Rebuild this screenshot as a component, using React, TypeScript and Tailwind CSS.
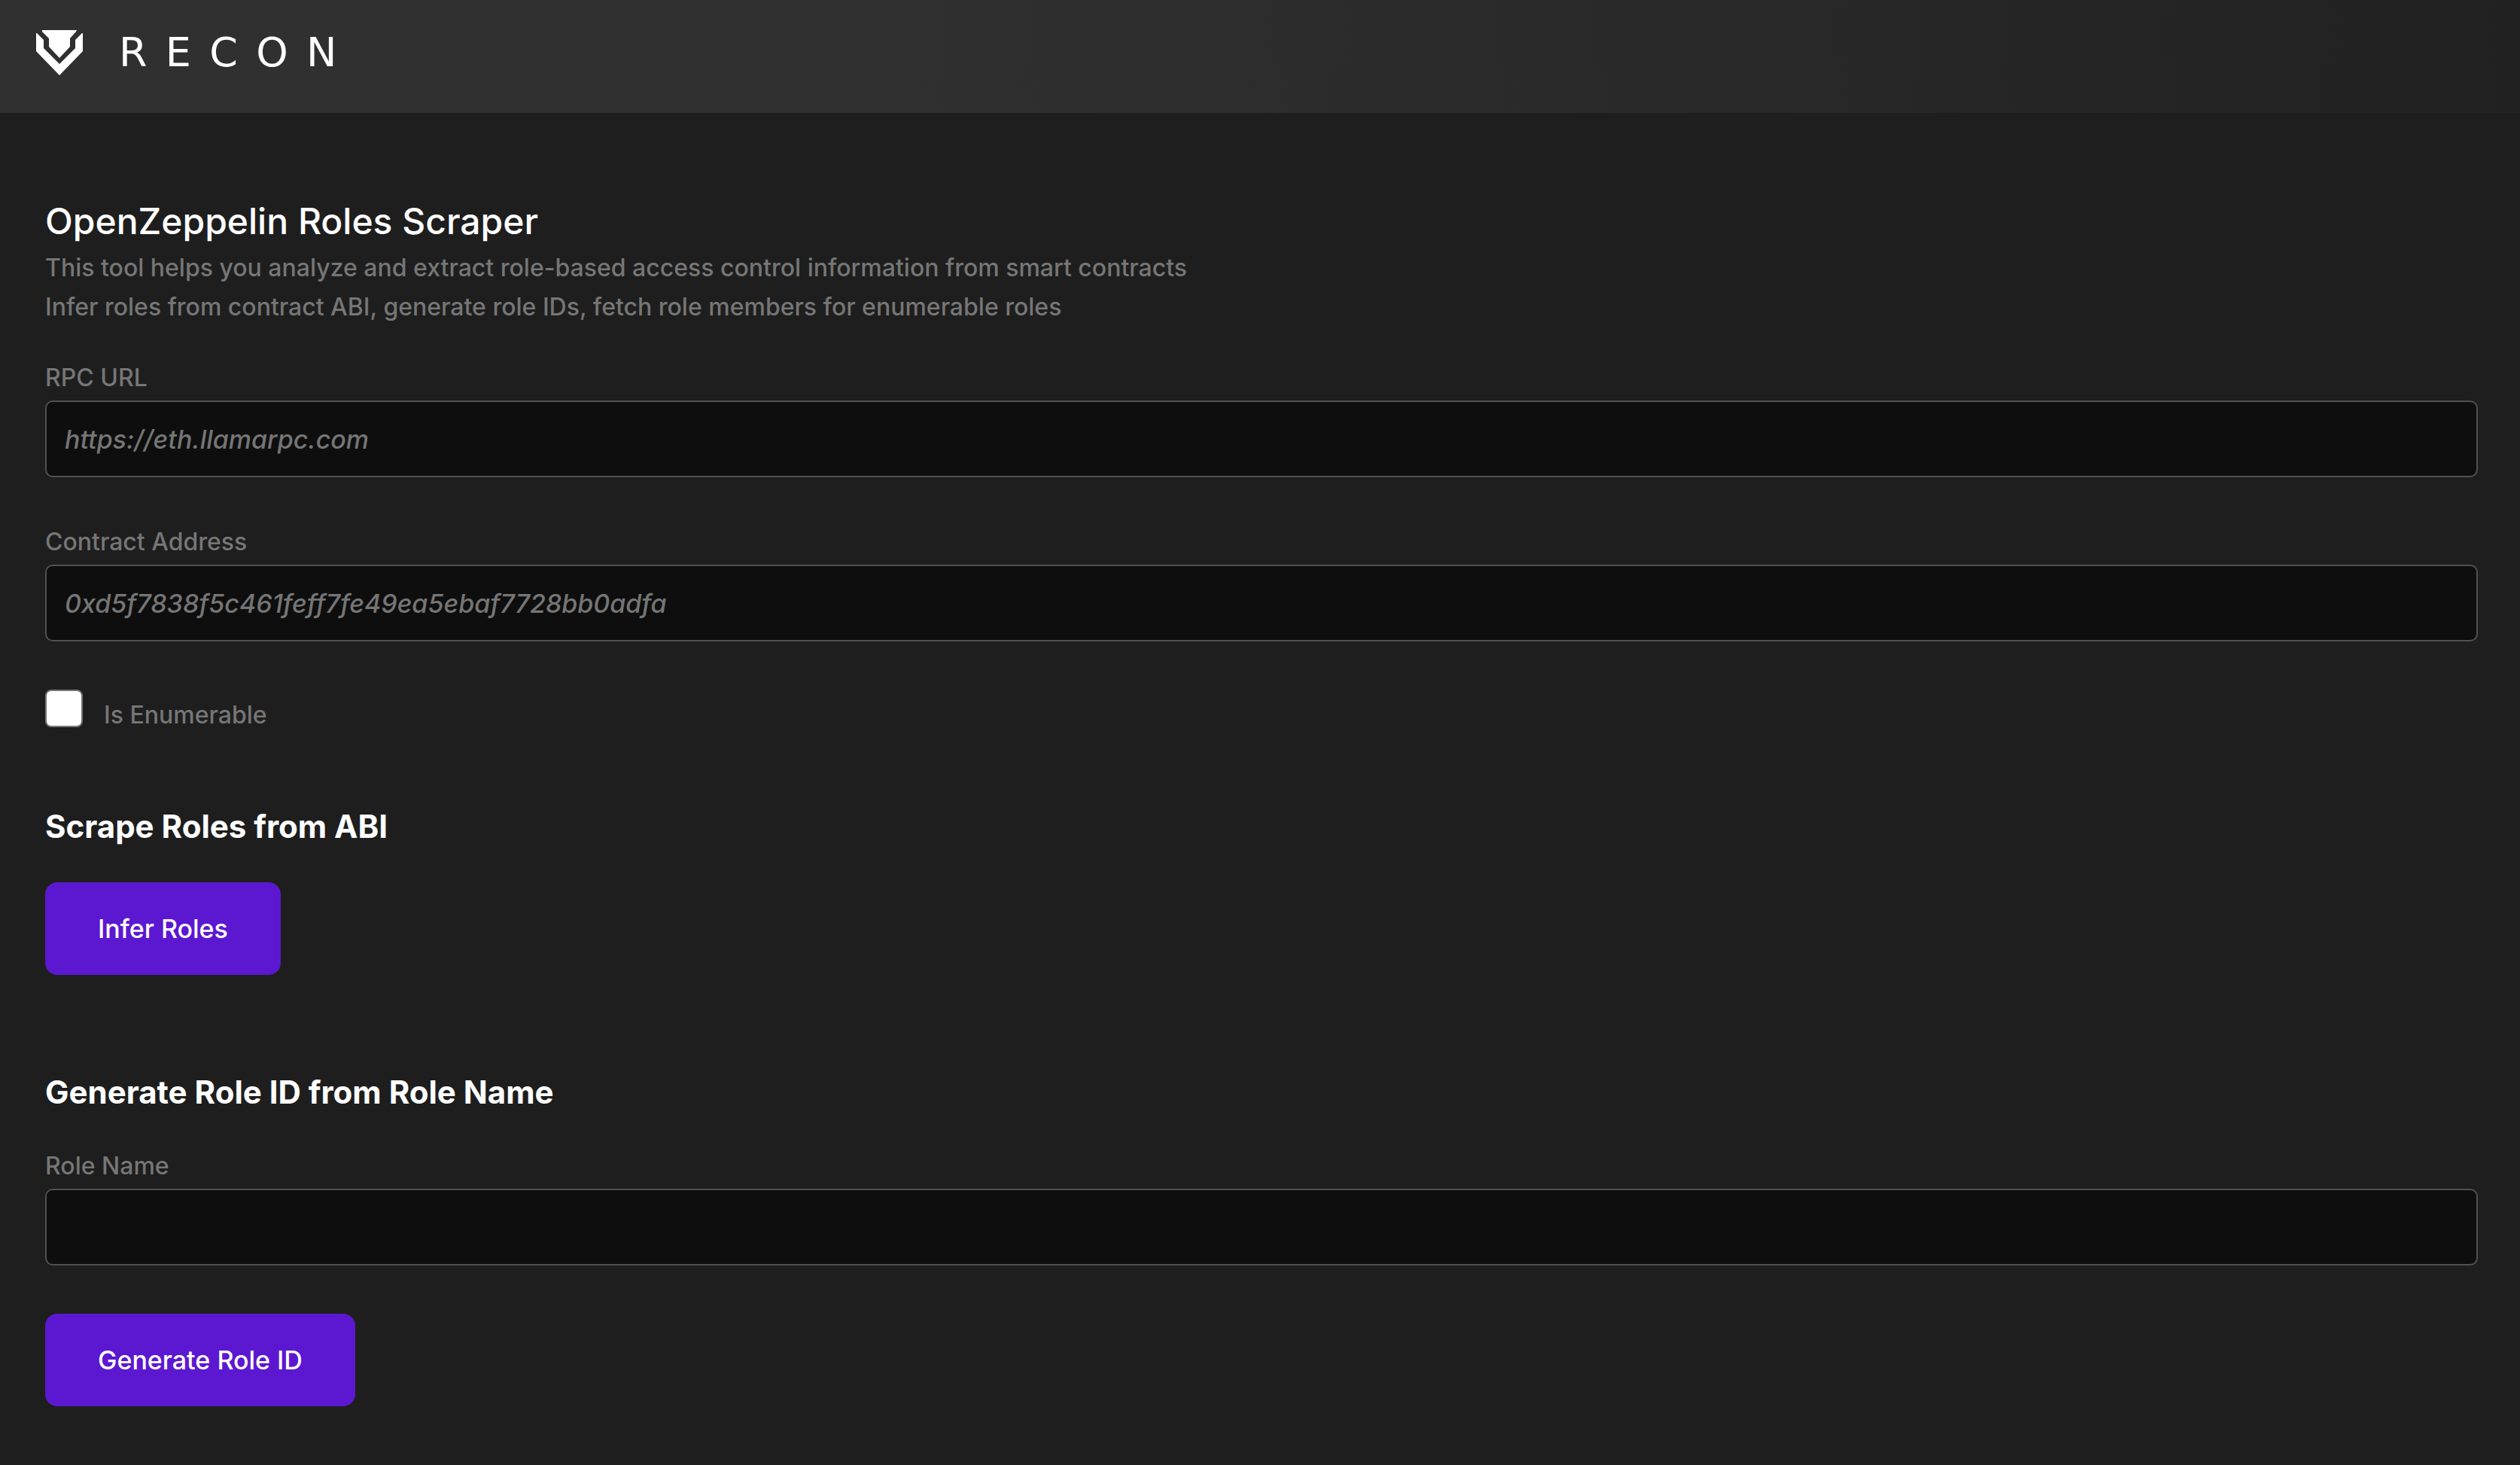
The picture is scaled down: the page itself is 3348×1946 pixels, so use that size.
import React, { useState } from 'react';

interface FieldProps {
  id: string;
  label: string;
  placeholder?: string;
  value: string;
  onChange: (value: string) => void;
}

const Logo: React.FC = () => (
  <a href="/" className="flex items-center gap-12 text-white">
    <svg viewBox="0 0 62 60" className="h-[60px] w-[62px]" fill="currentColor" aria-hidden="true">
      <path d="M8 0h46l-1 2-8 9v11L31 37 17 22V11L8 2z" />
      <path d="M0 4l1 0 9 9v11l21 21 21-21V13l9-9h1v24L31 60 0 28z" />
    </svg>
    <span className="font-['DejaVu_Sans',sans-serif] text-[54px] leading-[60px] tracking-[0.45em]">RECON</span>
  </a>
);

const Field: React.FC<FieldProps> = ({ id, label, placeholder, value, onChange }) => (
  <div className="flex flex-col">
    <label htmlFor={id} className="mb-2 text-[32px] leading-[44px] text-[#767676]">
      {label}
    </label>
    <input
      id={id}
      type="text"
      value={value}
      placeholder={placeholder}
      onChange={(e) => onChange(e.target.value)}
      className="h-[102px] w-full rounded-[10px] border-2 border-[#505050] bg-[#0e0e0e] px-6 text-[34px] text-white outline-none placeholder:italic placeholder:text-[#757575]"
    />
  </div>
);

const ActionButton: React.FC<{ children: React.ReactNode }> = ({ children }) => (
  <button
    type="button"
    className="h-[123px] self-start rounded-2xl bg-[#5c18d0] px-[70px] text-[34px] text-white hover:bg-[#6d2ae0]"
  >
    {children}
  </button>
);

const App: React.FC = () => {
  const [rpcUrl, setRpcUrl] = useState('');
  const [address, setAddress] = useState('');
  const [enumerable, setEnumerable] = useState(false);
  const [roleName, setRoleName] = useState('');

  return (
    <div className="min-h-screen bg-[#1e1e1e] font-[Inter,sans-serif] font-medium">
      <header className="flex h-[150px] items-start bg-linear-to-r from-[#303030] via-[#303030] via-35% to-[#212121] px-12 pt-10">
        <Logo />
      </header>

      <main className="flex flex-col pt-28 pr-14 pb-16 pl-[60px]">
        <h1 className="mb-1 text-[48px] leading-[64px] text-white">OpenZeppelin Roles Scraper</h1>
        <p className="text-[32px] leading-[52px] text-[#767676]">
          This tool helps you analyze and extract role-based access control information from smart contracts
          <br />
          Infer roles from contract ABI, generate role IDs, fetch role members for enumerable roles
        </p>

        {/* Contract details */}
        <div className="flex flex-col gap-16 pt-[46px]">
          <Field id="rpc-url" label="RPC URL" placeholder="https://eth.llamarpc.com" value={rpcUrl} onChange={setRpcUrl} />
          <Field
            id="address"
            label="Contract Address"
            placeholder="0xd5f7838f5c461feff7fe49ea5ebaf7728bb0adfa"
            value={address}
            onChange={setAddress}
          />
          <div className="flex items-start gap-7">
            <input
              id="enumerable"
              type="checkbox"
              checked={enumerable}
              onChange={(e) => setEnumerable(e.target.checked)}
              className="size-[50px] appearance-none rounded-lg border-2 border-[#767676] bg-white checked:bg-[#5c18d0]"
            />
            <label htmlFor="enumerable" className="pt-2 text-[32px] leading-[52px] text-[#767676]">
              Is Enumerable
            </label>
          </div>
        </div>

        <section className="flex flex-col gap-11 pt-[92px]">
          <h2 className="text-[42px] leading-[60px] font-bold text-white">Scrape Roles from ABI</h2>
          <ActionButton>Infer Roles</ActionButton>
        </section>

        <section className="flex flex-col pt-[126px]">
          <h2 className="text-[42px] leading-[60px] font-bold text-white">Generate Role ID from Role Name</h2>
          <div className="flex flex-col gap-16 pt-[46px]">
            <Field id="role-name" label="Role Name" value={roleName} onChange={setRoleName} />
            <ActionButton>Generate Role ID</ActionButton>
          </div>
        </section>
      </main>
    </div>
  );
};

export default App;
